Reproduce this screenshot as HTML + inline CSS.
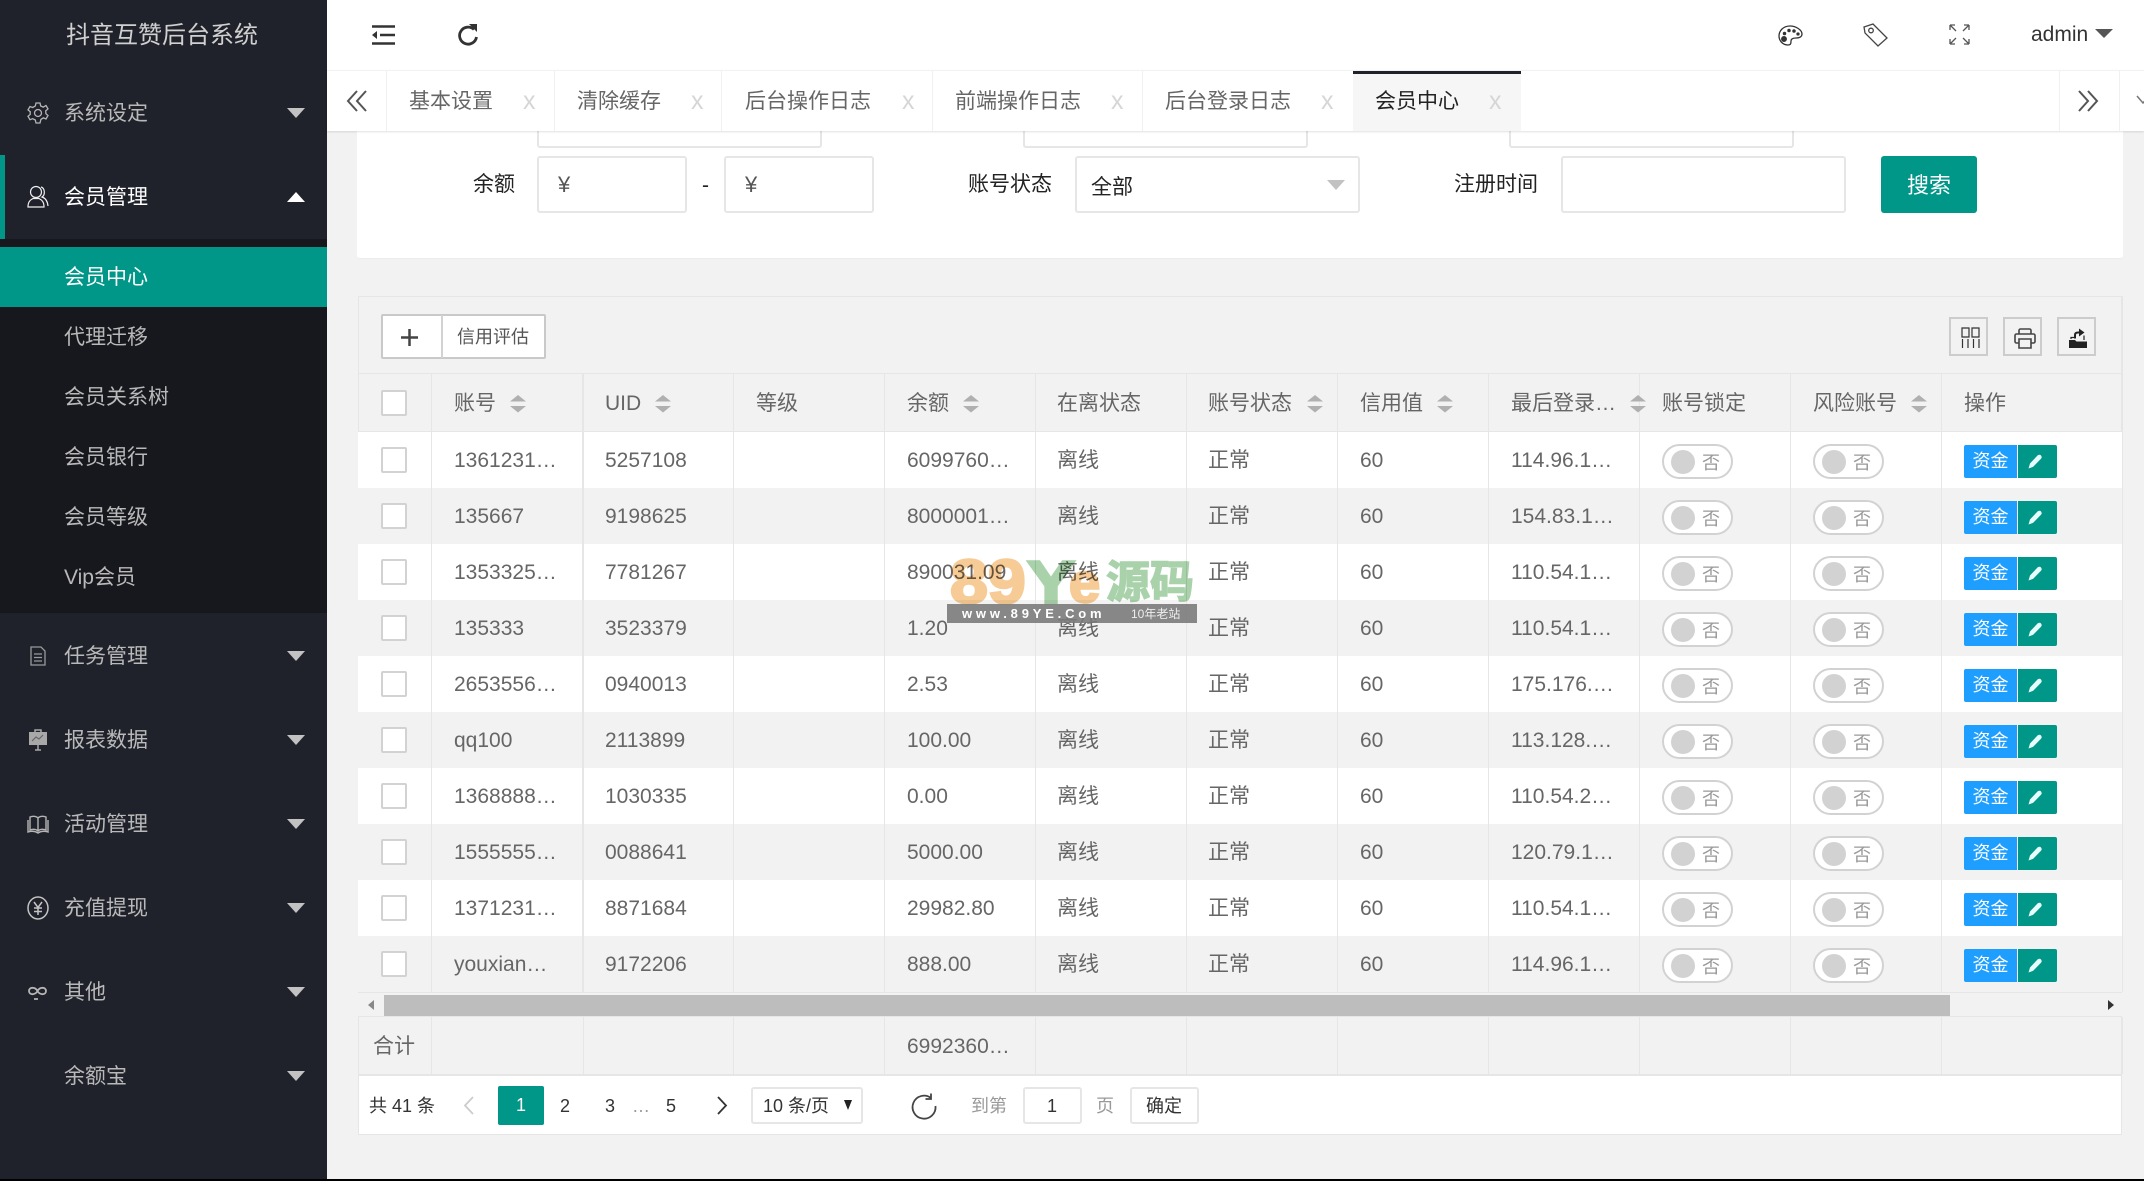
<!DOCTYPE html>
<html lang="zh-CN"><head><meta charset="utf-8"><title>会员中心</title>
<style>
*{box-sizing:border-box;margin:0;padding:0}
html,body{width:2144px;height:1181px;overflow:hidden;background:#f2f2f2}
body{position:relative;font-family:"Liberation Sans","Noto Sans CJK SC",sans-serif;font-size:21px;color:#666}
.t{position:absolute;white-space:nowrap;line-height:30px;height:30px;margin-top:1px}
.box{position:absolute;background:#fff;border:2px solid #e6e6e6;border-radius:3px}
svg{position:absolute;overflow:visible;fill:none}
#side{position:absolute;left:0;top:0;width:327px;height:1179px;background:#1f222b;overflow:hidden}
#side .t{left:64px;color:#b9b9b9}
#sub{position:absolute;left:0;top:239px;width:327px;height:374px;background:#17181d}
#cur{position:absolute;left:0;top:247px;width:327px;height:60px;background:#009688}
#bar{position:absolute;left:0;top:155px;width:5px;height:84px;background:#009688}
.tri{position:absolute;left:287px;width:0;height:0;border-left:9px solid transparent;border-right:9px solid transparent;border-top:10px solid #c2c2c2}
.tri.up{border-top:0;border-bottom:10px solid #fff}
#head{position:absolute;left:327px;top:0;width:1817px;height:70px;background:#fff}
#tabs{position:absolute;left:327px;top:70px;width:1817px;height:61px;background:#fff;border-top:1px solid #f2f2f2;box-shadow:0 1px 2px rgba(0,0,0,.12);z-index:5}
.sep{position:absolute;top:71px;width:1px;height:60px;background:#f0f0f0;z-index:6}
.tb{z-index:7;color:#666}
.x{z-index:7;color:#d6d6d6;font-size:25px;font-weight:400}
#card{position:absolute;left:357px;top:131px;width:1766px;height:128px;background:#fff;border-bottom:1px solid #ebebeb;border-radius:0 0 3px 3px}
#tbl{position:absolute;left:358px;top:296px;width:1764px;height:837px;background:#f2f2f2;border:1px solid #e6e6e6;border-bottom:0}
.r{position:absolute;left:358px;width:1764px;height:56px;line-height:56px;background:#fff}
.g2{background:#f2f2f2}
.r b,.r i,.r em{position:absolute;font-weight:400;font-style:normal;white-space:nowrap}
.r b{top:1px}
.a{left:96px}.b{left:247px}.d{left:549px}.e{left:699px}.f{left:850px}.g{left:1002px}.h{left:1153px}
.cb{left:23px;top:15px;width:26px;height:26px;background:#fff;border:2px solid #d2d2d2;border-radius:2px}
.sw{top:12px;width:71px;height:35px;border:2px solid #d2d2d2;border-radius:18px;background:#fff}
.s1{left:1304px}.s2{left:1455px}
.sw u{position:absolute;left:7px;top:4px;width:24px;height:24px;border-radius:50%;background:#d2d2d2}
.sw s{position:absolute;left:38px;top:1px;line-height:33px;font-size:18px;color:#999;text-decoration:none}
.zj{left:1606px;top:13px;width:53px;height:33px;line-height:32px;background:#1e9fff;color:#fff;font-size:18px;text-align:center;border-radius:2px 0 0 2px}
.ed{left:1660px;top:13px;width:39px;height:33px;background:#009688;border-radius:0 2px 2px 0}
.v{position:absolute;width:1px;background:#e6e6e6}
.th{top:388px;color:#666}
.tool{position:absolute;top:317px;width:39px;height:39px;border:2px solid #ccc;background:#f2f2f2}
#wm{position:absolute;left:0;top:0;width:2144px;height:1181px;pointer-events:none}
#wm .big{font-weight:700;-webkit-text-stroke:2.5px currentColor;mix-blend-mode:multiply}
.p{font-size:18px;top:1090px;color:#333}
</style></head><body>

<svg width="0" height="0" style="position:absolute"><defs>
<g id="pen"><path d="M0.500 14.500L2 9.500 9.500 1.500a2.200 2.200 0 0 1 3.500 3.300L5.200 12.800Z" fill="#e6fffb"/></g>
<g id="so"><path d="M8 0 L16 6.500 L0 6.500Z M0 11 L16 11 L8 17.500Z" fill="#b0b0b0"/></g>
</defs></svg>

<div id="side">
  <div id="sub"></div><div id="cur"></div><div id="bar"></div>
  <div class="t" style="left:66px;top:20px;font-size:24px;color:#d0d0d0">抖音互赞后台系统</div>
  <div class="t" style="top:98px">系统设定</div><div class="tri" style="top:108px"></div>
  <div class="t" style="top:182px;color:#fff">会员管理</div><div class="tri up" style="top:192px"></div>
  <div class="t" style="top:262px;color:#fff">会员中心</div>
  <div class="t" style="top:322px">代理迁移</div>
  <div class="t" style="top:382px">会员关系树</div>
  <div class="t" style="top:442px">会员银行</div>
  <div class="t" style="top:502px">会员等级</div>
  <div class="t" style="top:562px">Vip会员</div>
  <div class="t" style="top:641px">任务管理</div><div class="tri" style="top:651px"></div>
  <div class="t" style="top:725px">报表数据</div><div class="tri" style="top:735px"></div>
  <div class="t" style="top:809px">活动管理</div><div class="tri" style="top:819px"></div>
  <div class="t" style="top:893px">充值提现</div><div class="tri" style="top:903px"></div>
  <div class="t" style="top:977px">其他</div><div class="tri" style="top:987px"></div>
  <div class="t" style="top:1061px">余额宝</div><div class="tri" style="top:1071px"></div>

  <svg style="left:27px;top:102px" width="22" height="22" stroke="#b5b5b5" stroke-width="1.300"><circle cx="11" cy="11" r="3.500"/><path d="M9 1h4l.7 3 2.600 1.100 2.700-1.600 2 3.400-2.300 2 .2 2.800 2.100 1.800-2 3.400-2.700-1-2.400 1.500L13 21H9l-.7-3-2.600-1.300-2.700 1-2-3.400 2.200-1.800V9.700L1 7.900l2-3.400 2.700 1L8.300 4Z"/></svg>
  <svg style="left:27px;top:185px" width="22" height="24" stroke="#eee" stroke-width="1.200"><circle cx="9" cy="7" r="5.500"/><path d="M1 22c0-5 2-7 5-8.500h6c3 1.500 5 3.500 5 8.500Z"/><path d="M14 2c4 1 4.500 8 1 10 3 1 5.500 4 6 9"/></svg>
  <svg style="left:30px;top:646px" width="16" height="20" stroke="#9a9a9a" stroke-width="1.300"><path d="M1 1h10l4 4v14H1Z M4 8h8M4 11.500h8M4 15h8"/></svg>
  <svg style="left:28px;top:729px" width="20" height="22"><path d="M1 3h18v13H1Z" fill="#a8a8a8"/><path d="M7 3V1h6v2M10 16v5M7 21h6" stroke="#a8a8a8" stroke-width="1.500"/><path d="M4 12l4-4 3 2 4-4" stroke="#666" stroke-width="1.200"/></svg>
  <svg style="left:27px;top:814px" width="22" height="20" stroke="#b5b5b5" stroke-width="1.400"><path d="M11 4C9 2 6 2 3 3v13c3-1 6-1 8 1 2-2 5-2 8-1V3c-3-1-6-1-8 1ZM11 4v13M1 6v12c3-1 7-1 10 1 3-2 7-2 10-1V6"/></svg>
  <svg style="left:27px;top:896px" width="22" height="24" stroke="#c4c4c4" stroke-width="1.500"><ellipse cx="11" cy="12" rx="10" ry="11"/><path d="M7 6l4 5.500L15 6M11 11.500V19M7 12h8M7 15.500h8"/></svg>
  <svg style="left:28px;top:984px" width="20" height="18" stroke="#b5b5b5" stroke-width="1.800"><path d="M9.500 7C7 2.500 1 3 1 7s6 4.500 8.500 0S18 3 18 7s-6 4.500-8.500 0ZM6 15h4"/></svg>
</div>

<div id="head"></div>
<svg style="left:372px;top:25px" width="23" height="20" stroke="#333" stroke-width="2.500"><path d="M0 1.500h23M8 10h15M0 18.500h23"/><path d="M5 6v8L0 10Z" fill="#333" stroke="none"/></svg>
<svg style="left:457px;top:24px" width="22" height="22" stroke="#333" stroke-width="2.800"><path d="M17 5.500A8.500 8.500 0 1 0 19.500 13"/><path d="M13 0l8 0v8Z" fill="#333" stroke="none" transform="translate(-1 0)"/></svg>
<svg style="left:1778px;top:25px" width="25" height="21" stroke="#333" stroke-width="1.300"><path d="M12 1C5 1 1 6 1 11s4 9 9 9c3 0 3-2 3-4s2-3 5-3 6-1 6-4c0-4-6-8-12-8Z"/><circle cx="6" cy="14" r="2.300" fill="#333"/><circle cx="6.500" cy="8.500" r="1.100" fill="#333"/><circle cx="11" cy="5.500" r="1.100" fill="#333"/><circle cx="16" cy="6" r="1.100" fill="#333"/><circle cx="20" cy="9" r="1" fill="#333"/></svg>
<svg style="left:1863px;top:23px" width="25" height="24" stroke="#444" stroke-width="1.300"><path d="M1 4l9-3 14 14-9 8L2 10Z"/><circle cx="8" cy="7.500" r="2.300"/></svg>
<svg style="left:1949px;top:24px" width="21" height="21" stroke="#555" stroke-width="1.300"><path d="M1 1l6 6M1 1v5M1 1h5M20 1l-6 6M20 1v5M20 1h-5M1 20l6-6M1 20v-5M1 20h5M20 20l-6-6M20 20v-5M20 20h-5"/></svg>
<div class="t" style="left:2031px;top:19px;color:#333">admin</div>
<div style="position:absolute;left:2095px;top:29px;border-left:9.500px solid transparent;border-right:9.500px solid transparent;border-top:9.500px solid #555"></div>

<div id="tabs"></div>
<div class="sep" style="left:386px"></div><div class="sep" style="left:554px"></div><div class="sep" style="left:721px"></div><div class="sep" style="left:932px"></div><div class="sep" style="left:1142px"></div><div class="sep" style="left:2059px"></div><div class="sep" style="left:2119px"></div>
<div style="position:absolute;left:1353px;top:71px;width:168px;height:60px;background:#f6f6f6;z-index:6"></div>
<div style="position:absolute;left:1353px;top:71px;width:168px;height:3px;background:#20222a;z-index:7"></div>
<svg style="left:347px;top:91px;z-index:7" width="20" height="20" stroke="#555" stroke-width="2"><path d="M10 0L1 10l9 10M19 0l-9 10 9 10"/></svg>
<svg style="left:2078px;top:91px;z-index:7" width="20" height="20" stroke="#555" stroke-width="2"><path d="M1 0l9 10-9 10M10 0l9 10-9 10"/></svg>
<svg style="left:2137px;top:96px;z-index:7" width="10" height="8" stroke="#777" stroke-width="1.500"><path d="M0 0l6 7 6-7"/></svg>

<div class="t tb" style="left:409px;top:86px">基本设置</div><div class="t x" style="left:523px;top:85px">x</div>
<div class="t tb" style="left:577px;top:86px">清除缓存</div><div class="t x" style="left:691px;top:85px">x</div>
<div class="t tb" style="left:745px;top:86px">后台操作日志</div><div class="t x" style="left:902px;top:85px">x</div>
<div class="t tb" style="left:955px;top:86px">前端操作日志</div><div class="t x" style="left:1111px;top:85px">x</div>
<div class="t tb" style="left:1165px;top:86px">后台登录日志</div><div class="t x" style="left:1321px;top:85px">x</div>
<div class="t tb" style="left:1375px;top:86px;color:#222">会员中心</div><div class="t x" style="left:1489px;top:85px">x</div>

<div id="card"></div>
<div class="box" style="left:537px;top:100px;width:285px;height:48px"></div>
<div class="box" style="left:1023px;top:100px;width:285px;height:48px"></div>
<div class="box" style="left:1509px;top:100px;width:285px;height:48px"></div>
<div class="t" style="left:473px;top:169px;color:#222">余额</div>
<div class="box" style="left:537px;top:156px;width:150px;height:57px"></div>
<div class="t" style="left:558px;top:169px;color:#555;font-size:22px">¥</div>
<div class="t" style="left:702px;top:170px;color:#222">-</div>
<div class="box" style="left:724px;top:156px;width:150px;height:57px"></div>
<div class="t" style="left:745px;top:169px;color:#555;font-size:22px">¥</div>
<div class="t" style="left:968px;top:169px;color:#222">账号状态</div>
<div class="box" style="left:1075px;top:156px;width:285px;height:57px"></div>
<div class="t" style="left:1091px;top:172px;color:#222">全部</div>
<div style="position:absolute;left:1327px;top:180px;border-left:9.500px solid transparent;border-right:9.500px solid transparent;border-top:10px solid #c2c2c2"></div>
<div class="t" style="left:1454px;top:169px;color:#222">注册时间</div>
<div class="box" style="left:1561px;top:156px;width:285px;height:57px"></div>
<div style="position:absolute;left:1881px;top:156px;width:96px;height:57px;line-height:59px;background:#009688;color:#fff;text-align:center;font-size:22px;border-radius:3px">搜索</div>

<div id="tbl"></div>
<div style="position:absolute;left:381px;top:314px;width:165px;height:45px;background:#fff;border:2px solid #c9c9c9;border-radius:2px"></div>
<div style="position:absolute;left:441px;top:315px;width:2px;height:43px;background:#d2d2d2"></div>
<svg style="left:401px;top:329px" width="17" height="17" stroke="#444" stroke-width="2.500"><path d="M8.500 0v17M0 8.500h17"/></svg>
<div class="t" style="left:457px;top:321px;font-size:18px;color:#555">信用评估</div>
<div class="tool" style="left:1949px"></div><div class="tool" style="left:2003px"></div><div class="tool" style="left:2057px"></div>
<svg style="left:1961px;top:327px" width="19" height="21" stroke="#333" stroke-width="1.200"><path d="M1 1h7v9H1ZM11 1h7v9h-7ZM1.500 12v9M7 12v9M12.500 12v9M18 12v9"/></svg>
<svg style="left:2014px;top:328px" width="22" height="21" stroke="#444" stroke-width="1.600"><path d="M5 6V2.500A1.500 1.500 0 0 1 6.500 1h9A1.500 1.500 0 0 1 17 2.500V6M5 15H2.500A1.500 1.500 0 0 1 1 13.500V7.500A1.500 1.500 0 0 1 2.500 6h17A1.500 1.500 0 0 1 21 7.500v6a1.500 1.500 0 0 1-1.500 1.500H17M5 11h12v9H5Z"/></svg>
<svg style="left:2068px;top:328px" width="20" height="20"><path d="M1 12h6l1.500 1.500H19V20H1Z" fill="#222"/><path d="M3 11V9.500h3M16 12V7.500" stroke="#222" stroke-width="1.200"/><path d="M7 10.500V7c0-1.500 1-2.500 3-2.500h2" stroke="#222" stroke-width="2"/><path d="M11 .5l5.500 4-5.500 4Z" fill="#222"/></svg>

<div style="position:absolute;left:358px;top:373px;width:1764px;height:59px;border-top:1px solid #e6e6e6;border-bottom:1px solid #e6e6e6"></div>
<i class="cb" style="position:absolute;left:381px;top:390px"></i>
<div class="t th" style="left:454px">账号</div><div class="t th" style="left:605px">UID</div><div class="t th" style="left:756px">等级</div><div class="t th" style="left:907px">余额</div><div class="t th" style="left:1057px">在离状态</div><div class="t th" style="left:1208px">账号状态</div><div class="t th" style="left:1360px">信用值</div><div class="t th" style="left:1511px">最后登录…</div><div class="t th" style="left:1662px">账号锁定</div><div class="t th" style="left:1813px">风险账号</div><div class="t th" style="left:1964px">操作</div>
<svg style="left:510px;top:395px" width="16" height="18"><use href="#so"/></svg>
<svg style="left:655px;top:395px" width="16" height="18"><use href="#so"/></svg>
<svg style="left:963px;top:395px" width="16" height="18"><use href="#so"/></svg>
<svg style="left:1307px;top:395px" width="16" height="18"><use href="#so"/></svg>
<svg style="left:1437px;top:395px" width="16" height="18"><use href="#so"/></svg>
<svg style="left:1630px;top:395px;z-index:1" width="10" height="18"><use href="#so"/></svg>
<svg style="left:1911px;top:395px" width="16" height="18"><use href="#so"/></svg>

<div class="r" style="top:432px"><i class="cb"></i><b class="a">1361231…</b><b class="b">5257108</b><b class="d">6099760…</b><b class="e">离线</b><b class="f">正常</b><b class="g">60</b><b class="h">114.96.1…</b><i class="sw s1"><u></u><s>否</s></i><i class="sw s2"><u></u><s>否</s></i><em class="zj">资金</em><em class="ed"><svg style="left:10px;top:9px" width="15" height="15"><use href="#pen"/></svg></em></div>
<div class="r g2" style="top:488px"><i class="cb"></i><b class="a">135667</b><b class="b">9198625</b><b class="d">8000001…</b><b class="e">离线</b><b class="f">正常</b><b class="g">60</b><b class="h">154.83.1…</b><i class="sw s1"><u></u><s>否</s></i><i class="sw s2"><u></u><s>否</s></i><em class="zj">资金</em><em class="ed"><svg style="left:10px;top:9px" width="15" height="15"><use href="#pen"/></svg></em></div>
<div class="r" style="top:544px"><i class="cb"></i><b class="a">1353325…</b><b class="b">7781267</b><b class="d">890031.09</b><b class="e">离线</b><b class="f">正常</b><b class="g">60</b><b class="h">110.54.1…</b><i class="sw s1"><u></u><s>否</s></i><i class="sw s2"><u></u><s>否</s></i><em class="zj">资金</em><em class="ed"><svg style="left:10px;top:9px" width="15" height="15"><use href="#pen"/></svg></em></div>
<div class="r g2" style="top:600px"><i class="cb"></i><b class="a">135333</b><b class="b">3523379</b><b class="d">1.20</b><b class="e">离线</b><b class="f">正常</b><b class="g">60</b><b class="h">110.54.1…</b><i class="sw s1"><u></u><s>否</s></i><i class="sw s2"><u></u><s>否</s></i><em class="zj">资金</em><em class="ed"><svg style="left:10px;top:9px" width="15" height="15"><use href="#pen"/></svg></em></div>
<div class="r" style="top:656px"><i class="cb"></i><b class="a">2653556…</b><b class="b">0940013</b><b class="d">2.53</b><b class="e">离线</b><b class="f">正常</b><b class="g">60</b><b class="h">175.176.…</b><i class="sw s1"><u></u><s>否</s></i><i class="sw s2"><u></u><s>否</s></i><em class="zj">资金</em><em class="ed"><svg style="left:10px;top:9px" width="15" height="15"><use href="#pen"/></svg></em></div>
<div class="r g2" style="top:712px"><i class="cb"></i><b class="a">qq100</b><b class="b">2113899</b><b class="d">100.00</b><b class="e">离线</b><b class="f">正常</b><b class="g">60</b><b class="h">113.128.…</b><i class="sw s1"><u></u><s>否</s></i><i class="sw s2"><u></u><s>否</s></i><em class="zj">资金</em><em class="ed"><svg style="left:10px;top:9px" width="15" height="15"><use href="#pen"/></svg></em></div>
<div class="r" style="top:768px"><i class="cb"></i><b class="a">1368888…</b><b class="b">1030335</b><b class="d">0.00</b><b class="e">离线</b><b class="f">正常</b><b class="g">60</b><b class="h">110.54.2…</b><i class="sw s1"><u></u><s>否</s></i><i class="sw s2"><u></u><s>否</s></i><em class="zj">资金</em><em class="ed"><svg style="left:10px;top:9px" width="15" height="15"><use href="#pen"/></svg></em></div>
<div class="r g2" style="top:824px"><i class="cb"></i><b class="a">1555555…</b><b class="b">0088641</b><b class="d">5000.00</b><b class="e">离线</b><b class="f">正常</b><b class="g">60</b><b class="h">120.79.1…</b><i class="sw s1"><u></u><s>否</s></i><i class="sw s2"><u></u><s>否</s></i><em class="zj">资金</em><em class="ed"><svg style="left:10px;top:9px" width="15" height="15"><use href="#pen"/></svg></em></div>
<div class="r" style="top:880px"><i class="cb"></i><b class="a">1371231…</b><b class="b">8871684</b><b class="d">29982.80</b><b class="e">离线</b><b class="f">正常</b><b class="g">60</b><b class="h">110.54.1…</b><i class="sw s1"><u></u><s>否</s></i><i class="sw s2"><u></u><s>否</s></i><em class="zj">资金</em><em class="ed"><svg style="left:10px;top:9px" width="15" height="15"><use href="#pen"/></svg></em></div>
<div class="r g2" style="top:936px"><i class="cb"></i><b class="a">youxian…</b><b class="b">9172206</b><b class="d">888.00</b><b class="e">离线</b><b class="f">正常</b><b class="g">60</b><b class="h">114.96.1…</b><i class="sw s1"><u></u><s>否</s></i><i class="sw s2"><u></u><s>否</s></i><em class="zj">资金</em><em class="ed"><svg style="left:10px;top:9px" width="15" height="15"><use href="#pen"/></svg></em></div>

<div class="v" style="left:431px;top:373px;height:619px"></div><div class="v" style="left:582px;top:373px;height:619px;width:2px"></div><div class="v" style="left:733px;top:373px;height:619px"></div><div class="v" style="left:884px;top:373px;height:619px"></div><div class="v" style="left:1035px;top:373px;height:619px"></div><div class="v" style="left:1186px;top:373px;height:619px"></div><div class="v" style="left:1337px;top:373px;height:619px"></div><div class="v" style="left:1488px;top:373px;height:619px"></div><div class="v" style="left:1639px;top:373px;height:619px"></div><div class="v" style="left:1790px;top:373px;height:619px"></div><div class="v" style="left:1941px;top:373px;height:619px"></div><div class="v" style="left:2122px;top:296px;height:696px"></div>

<div style="position:absolute;left:358px;top:992px;width:1764px;height:25px;background:#f2f2f2;border-top:1px solid #e6e6e6;border-bottom:1px solid #e6e6e6"></div>
<div style="position:absolute;left:384px;top:995px;width:1566px;height:21px;background:#bdbdbd"></div>
<div style="position:absolute;left:368px;top:1000px;border-top:5.500px solid transparent;border-bottom:5.500px solid transparent;border-right:6px solid #888"></div>
<div style="position:absolute;left:2108px;top:1000px;border-top:5.500px solid transparent;border-bottom:5.500px solid transparent;border-left:6px solid #333"></div>

<div class="v" style="left:431px;top:1017px;height:57px"></div><div class="v" style="left:583px;top:1017px;height:57px"></div><div class="v" style="left:733px;top:1017px;height:57px"></div><div class="v" style="left:884px;top:1017px;height:57px"></div><div class="v" style="left:1035px;top:1017px;height:57px"></div><div class="v" style="left:1186px;top:1017px;height:57px"></div><div class="v" style="left:1337px;top:1017px;height:57px"></div><div class="v" style="left:1488px;top:1017px;height:57px"></div><div class="v" style="left:1639px;top:1017px;height:57px"></div><div class="v" style="left:1790px;top:1017px;height:57px"></div><div class="v" style="left:1941px;top:1017px;height:57px"></div><div class="v" style="left:2122px;top:1017px;height:57px"></div>
<div class="t" style="left:373px;top:1031px">合计</div>
<div class="t" style="left:907px;top:1031px">6992360…</div>

<div style="position:absolute;left:358px;top:1074px;width:1764px;height:61px;background:#fff;border:1px solid #e6e6e6;border-width:2px 1px 1px"></div>
<div class="t p" style="left:369px">共 41 条</div>
<svg style="left:463px;top:1096px" width="11" height="19" stroke="#ccc" stroke-width="1.800"><path d="M10 1L2 9.500l8 8.500"/></svg>
<div style="position:absolute;left:498px;top:1086px;width:46px;height:39px;line-height:39px;background:#009688;color:#fff;text-align:center;font-size:18px;border-radius:2px">1</div>
<div class="t p" style="left:560px">2</div><div class="t p" style="left:605px">3</div><div class="t p" style="left:632px;color:#999">…</div><div class="t p" style="left:666px">5</div>
<svg style="left:717px;top:1096px" width="11" height="19" stroke="#333" stroke-width="1.800"><path d="M1 1l8 8.500L1 18"/></svg>
<div class="box" style="left:751px;top:1087px;width:112px;height:37px"></div>
<div class="t p" style="left:763px">10 条/页</div>
<div style="position:absolute;left:844px;top:1100px;border-left:4.500px solid transparent;border-right:4.500px solid transparent;border-top:10px solid #222"></div>
<svg style="left:911px;top:1093px" width="26" height="26" stroke="#444" stroke-width="1.800"><path d="M20 5A11.500 11.500 0 1 0 24.500 13"/><path d="M20 .5V6H14.500"/></svg>
<div class="t p" style="left:971px;color:#999">到第</div>
<div class="box" style="left:1023px;top:1087px;width:59px;height:37px"></div>
<div class="t p" style="left:1047px">1</div>
<div class="t p" style="left:1096px;color:#999">页</div>
<div class="box" style="left:1130px;top:1087px;width:69px;height:37px"></div>
<div class="t p" style="left:1146px">确定</div>

<div id="wm">
  <div class="t big" style="left:950px;top:552px;font-size:62px;line-height:60px;height:60px;color:#f7cb95;transform:scaleX(1.1);transform-origin:0 50%">89</div>
  <div class="t big" style="left:1027px;top:552px;font-size:60px;line-height:60px;height:60px;color:#a9d2ab;transform:scaleX(1.2);transform-origin:0 50%">Y</div>
  <div class="t big" style="left:1069px;top:552px;font-size:56px;line-height:60px;height:60px;color:#f7cb95">e</div>
  <div class="t big" style="left:1106px;top:552px;font-size:44px;line-height:60px;height:60px;color:#a9d2ab;-webkit-text-stroke:1.500px currentColor">源码</div>
  <div style="position:absolute;left:947px;top:604px;width:250px;height:19px;background:rgba(120,120,120,.88)"></div>
  <div class="t" style="left:962px;top:598px;font-size:13px;font-weight:700;letter-spacing:3.800px;color:#fff">www.89YE.Com</div>
  <div class="t" style="left:1131px;top:598px;font-size:12px;color:#eee">10年老站</div>
</div>

<div style="position:absolute;left:0;top:1179px;width:2144px;height:2px;background:#000;z-index:10"></div>
</body></html>
